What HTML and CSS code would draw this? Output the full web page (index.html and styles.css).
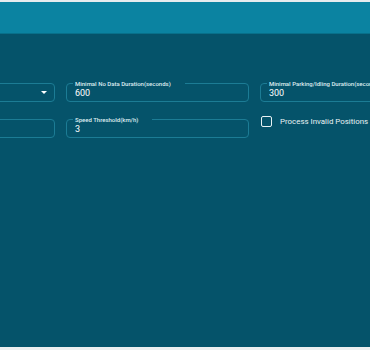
FILE: index.html
```html
<!DOCTYPE html>
<html>
  <head>
    <title>Trip Settings</title>
    <meta charset="UTF-8">
    <link rel="stylesheet" href="styles.css">
  </head>
  <body>
    <div class="top-line"></div>
    <div class="toolbar"></div>
    <div class="content">
      <form class="settings">
        <fieldset class="field">
          <legend class="legend-empty"></legend>
          <div class="value select">
            <span></span>
            <i class="arrow"></i>
          </div>
        </fieldset>
        <fieldset class="field">
          <legend>Minimal No Data Duration(seconds)</legend>
          <div class="value">600</div>
        </fieldset>
        <fieldset class="field">
          <legend>Minimal Parking/Idling Duration(seconds)</legend>
          <div class="value">300</div>
        </fieldset>

        <fieldset class="field">
          <legend class="legend-empty"></legend>
          <div class="value"></div>
        </fieldset>
        <fieldset class="field">
          <legend>Speed Threshold(km/h)</legend>
          <div class="value">3</div>
        </fieldset>
        <label class="check">
          <span class="box"></span>
          <span>Process Invalid Positions</span>
        </label>
      </form>
    </div>
    <div class="bottom-line"></div>
  </body>
</html>
```

FILE: styles.css
```css
html, body {
  width: 100%;
  height: 100%;
  padding: 0px;
  margin: 0px;
}

body {
  background-color: #05536a;
  font-family: Roboto, "Liberation Sans", sans-serif;
  color: #ffffff;
  overflow: hidden;
  display: flex;
  flex-direction: column;
}

.top-line {
  height: 2px;
  background-color: #e6ecee;
}

.toolbar {
  height: 31px;
  background-color: #0b83a1;
  border-bottom: 1px solid #08708a;
}

.content {
  flex: 1;
  padding-top: 46px;
}

.settings {
  display: grid;
  grid-template-columns: 183px 183px 183px;
  column-gap: 11px;
  row-gap: 14px;
  margin-left: -128px;
  align-items: start;
}

.field {
  margin: 0;
  padding: 0 6px 3px 6px;
  border: 1px solid #1c7c95;
  border-radius: 4px;
  min-width: 0;
}

.field legend {
  font-size: 6px;
  line-height: 7px;
  font-weight: 500;
  color: #dfeef2;
  padding: 0 14px 0 2px;
  white-space: nowrap;
}

.field .legend-empty {
  height: 7px;
  width: 0;
  padding: 0;
}

.value {
  font-size: 9px;
  line-height: 12px;
  height: 11px;
  padding-left: 2px;
  color: #ffffff;
}

.select {
  display: flex;
  justify-content: space-between;
  align-items: center;
}

.arrow {
  width: 0;
  height: 0;
  margin-right: 1px;
  border-left: 3px solid transparent;
  border-right: 3px solid transparent;
  border-top: 3px solid #ffffff;
}

.check {
  display: flex;
  align-items: center;
  gap: 8px;
  padding-left: 1px;
  font-size: 7.9px;
  line-height: 11px;
  color: #e8f2f4;
  white-space: nowrap;
}

.check .box {
  flex: none;
  width: 9px;
  height: 9px;
  border: 1px solid #e8f2f4;
  border-radius: 2px;
}

.bottom-line {
  height: 3px;
  background-color: #eceff0;
}
```
